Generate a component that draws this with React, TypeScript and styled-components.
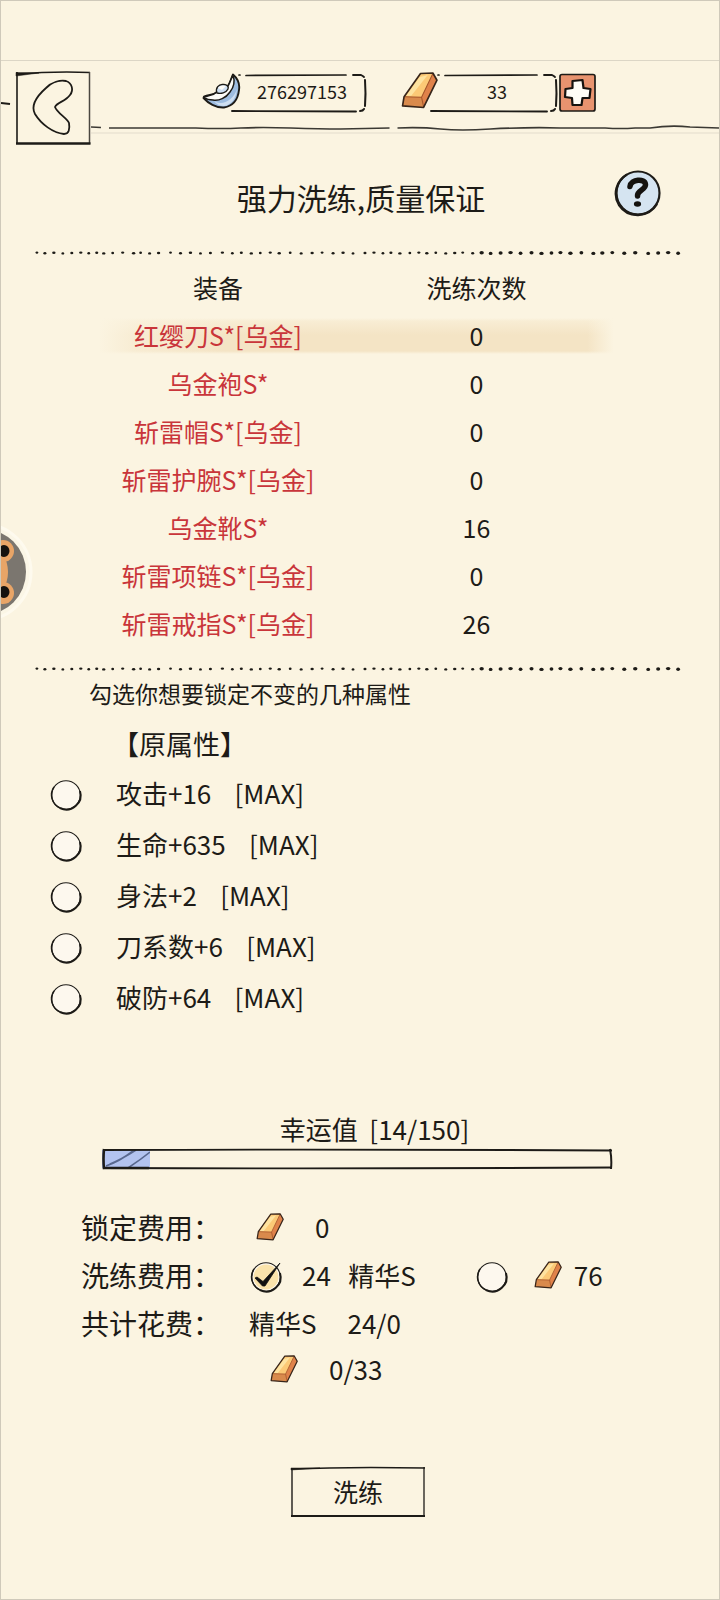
import React, { useState } from "react";
import styled, { createGlobalStyle } from "styled-components";

const ink = "#1d1b17";
const paper = "#fbf4e1";
const fontStack = '"Noto Sans CJK SC", "Noto Sans", sans-serif';

const GlobalStyle = createGlobalStyle`
  *, *::before, *::after { box-sizing: border-box; }
  body { margin: 0; background: ${paper}; }
  button, input { font: inherit; color: inherit; margin: 0; }
`;

const Page = styled.main`
  position: relative;
  min-height: 100vh;
  overflow: hidden;
  background: ${paper};
  border: 1px solid #cfc9ba;
  color: ${ink};
  font-family: ${fontStack};
  font-size: 26px;
  line-height: 48px;
`;

const StatusStrip = styled.div`
  height: 60px;
  border-bottom: 1px solid #dcd6c6;
`;

const Header = styled.header`
  display: grid;
  grid-template-columns: 14px 76px 1fr;
  padding-top: 10px;
`;

const BackButton = styled.button`
  padding: 0;
  border: 0;
  background: none;
  height: 76px;
  cursor: pointer;
  svg { display: block; }
`;

const Stub = styled.svg`
  margin-top: 28px;
`;

const HeaderMain = styled.div`
  display: flex;
  flex-direction: column;
  gap: 10px;
  padding-top: 1px;
`;

const Wallet = styled.div`
  display: flex;
  padding-left: 111px;
`;

const Pill = styled.div<{ $width: number; $gap?: number }>`
  display: grid;
  width: ${(p) => p.$width}px;
  height: 42px;
  margin-right: ${(p) => p.$gap ?? 0}px;
  > * { grid-area: 1 / 1; }
`;

const PillValue = styled.span`
  padding-left: 34px;
  text-align: center;
  font-size: 18px;
  line-height: 38px;
`;

const IconButton = styled.button`
  display: block;
  padding: 0;
  border: 0;
  background: none;
  cursor: pointer;
  svg { display: block; }
`;

const HeaderLine = styled.svg`
  display: block;
  width: 100%;
  height: 10px;
`;

const TitleRow = styled.div`
  display: grid;
  grid-template-columns: 1fr auto 1fr;
  align-items: center;
  padding: 0 56px 0 58px;
  margin-top: 20px;
  height: 52px;
`;

const Title = styled.h1`
  grid-column: 2;
  margin: 0;
  padding-top: 8px;
  font-size: 30px;
  line-height: 44px;
  font-weight: 400;
`;

const HelpSlot = styled.div`
  justify-self: end;
`;

const Dots = styled.svg`
  display: block;
  width: 100%;
  height: 12px;
`;

const TitleSection = styled.section`
  padding-bottom: 28px;
`;

const GearSection = styled.section`
  padding: 4px 100px 16px 87px;
`;

const GearTable = styled.table`
  width: 100%;
  table-layout: fixed;
  border-collapse: collapse;
  font-size: 25px;
`;

const GearRow = styled.tr<{ $active?: boolean }>`
  height: 48px;
  background: ${(p) =>
    p.$active
      ? "linear-gradient(90deg, rgba(251,244,225,1) 2%, rgba(251,244,225,0.5) 9%, rgba(251,244,225,0) 26%, rgba(251,244,225,0) 94%, rgba(251,244,225,1) 99%), linear-gradient(180deg, transparent 7px, #f8edd4 10px, #f4e4c5 24px, #f4e4c5 40px, transparent 43px)"
      : "none"};
`;

const HeadCell = styled.th<{ $count?: boolean }>`
  padding: 0 ${(p) => (p.$count ? 14 : 0)}px 0 0;
  width: ${(p) => (p.$count ? "auto" : "260px")};
  font-weight: 400;
  line-height: 48px;
`;

const NameCell = styled.td`
  padding: 0;
  text-align: center;
  color: #c9353a;
`;

const CountCell = styled.td`
  padding: 0 14px 0 0;
  text-align: center;
`;

const LockSection = styled.fieldset`
  margin: 0;
  padding: 0 49px;
  border: 0;
`;

const Hint = styled.legend`
  padding: 0 0 0 39px;
  font-size: 23px;
  line-height: 36px;
`;

const GroupTitle = styled.h2`
  margin: 0;
  padding: 10px 0 0 62px;
  font-size: 27px;
  line-height: 46px;
  font-weight: 400;
`;

const OptionRow = styled.label`
  display: flex;
  align-items: center;
  gap: 34px;
  height: 51px;
  white-space: pre;
  cursor: pointer;
`;

const Tick = styled.span`
  display: grid;
  flex: none;
  width: 32px;
  height: 32px;
  margin-top: 4px;
  > * { grid-area: 1 / 1; }
  input { appearance: none; width: 32px; height: 32px; cursor: pointer; }
  svg { pointer-events: none; overflow: visible; }
`;

const LuckSection = styled.section`
  padding: 88px 106px 0 101px;
`;

const LuckLabel = styled.div`
  padding-left: 34px;
  text-align: center;
  line-height: 38px;
  white-space: pre;
`;

const Meter = styled.div`
  display: grid;
  height: 22px;
  > * { grid-area: 1 / 1; }
`;

const MeterFill = styled.div`
  margin: 2px 0;
  overflow: hidden;
  background: #b3c3f0;
  svg { display: block; }
`;

const MeterFrame = styled.svg`
  width: 100%;
  height: 22px;
`;

const CostSection = styled.section`
  display: grid;
  grid-template-columns: 168px 1fr;
  padding: 33px 72px 0 80px;
`;

const CostLabel = styled.div`
  font-size: 28px;
`;

const CostLine = styled.div<{ $indent?: number; $gap: number; $short?: boolean }>`
  display: flex;
  align-items: center;
  height: ${(p) => (p.$short ? 44 : 48)}px;
  gap: ${(p) => p.$gap}px;
  padding-left: ${(p) => p.$indent ?? 0}px;
  grid-column: 2;
  white-space: pre;
`;

const PayOption = styled.label<{ $gap: number }>`
  display: flex;
  align-items: center;
  gap: ${(p) => p.$gap}px;
  cursor: pointer;
`;

const ActionBar = styled.footer`
  display: flex;
  justify-content: center;
  padding: 75px 4px 74px 0;
`;

const RefineButton = styled.button`
  display: grid;
  width: 136px;
  height: 52px;
  padding: 0;
  border: 0;
  background: none;
  font-size: 25px;
  line-height: 50px;
  cursor: pointer;
  > * { grid-area: 1 / 1; }
`;

const FloatingBadge = styled.button`
  position: absolute;
  left: 0;
  top: 518px;
  padding: 0;
  border: 0;
  background: none;
  cursor: pointer;
  svg { display: block; }
`;

const DOT_X = [
  36, 44, 53, 62, 71, 80, 88, 96, 103, 112, 122, 133, 140, 149, 158, 170, 180, 190, 200, 210, 222, 232,
  241, 251, 260, 270, 279, 290, 301, 312, 322, 333, 343, 353, 365, 374, 383, 391, 400, 410, 419, 427, 436,
  446, 455, 463, 473, 482, 491, 501, 511, 521, 532, 542, 552, 561, 571, 582, 594, 603, 613, 625, 636, 649,
  659, 669, 679,
];

function DottedRule() {
  return (
    <Dots viewBox="0 0 720 12" aria-hidden="true">
      {DOT_X.map((x, i) => (
        <ellipse
          key={x}
          cx={x}
          cy={6 + ((i * 3) % 5) * 0.2 - 0.4}
          rx={(x > 480 ? 1.9 : 1.4) + (i % 3) * 0.15}
          ry={x > 480 ? 1.7 : 1.2}
          fill={ink}
        />
      ))}
    </Dots>
  );
}

function Ingot({ width, height }: { width: number; height: number }) {
  return (
    <svg width={width} height={height} viewBox="0 0 36 36" aria-hidden="true">
      <path d="M19 1.5 L31 1 L35 8 L22 34.500 L1.500 33 L3 24 Z" fill="#e0824a" />
      <path d="M19 1.500 L31 1.500 L20 24.500 L3.500 24 Z" fill="#fcc976" />
      <path d="M18 5 L26 3 L10 23 L5 23 Z" fill="#fee3a0" />
      <path d="M3.500 24 L20 24.500 L22 34 L1.500 32.500 Z" fill="#d98a4c" />
      <path d="M31 1.500 L20 24.500 M3.500 24 L20 24.500 L22 34" fill="none" stroke="#a5552a" strokeWidth="1" />
      <path
        d="M19 1.500 L31 1 L35 8 L22 34.500 L1.500 33 L3 24 Z"
        fill="none"
        stroke="#37251a"
        strokeWidth="1.600"
        strokeLinejoin="round"
      />
    </svg>
  );
}

function Silver() {
  return (
    <svg width="39" height="38" viewBox="0 0 39 38" aria-hidden="true">
      <path
        d="M31 2.500 C35 6 38 12 37 18 C36 27 31 34 22 35.500 C14 36 6 31 1.500 26 L2 24.500 C7 22 11 24 15 20 L26 14 C28 11 29 7 31 2.500 Z"
        fill="#9dbce0"
        stroke={ink}
        strokeWidth="1.900"
        strokeLinejoin="round"
      />
      <path d="M12 29 C20 34 31 29 35 17 C34 27 29 33 22 34 C18 34 14 32 12 29 Z" fill="#cfdff1" />
      <path
        d="M31 3 C33 9 32 15 28 20 C24 26 17 29 11 28 C7 28 4 27 2 25.500 C6 23 11 24 15 20 L26 14 C28 11 29 7 31 3 Z"
        fill="#fdfcf8"
        stroke={ink}
        strokeWidth="1.500"
        strokeLinejoin="round"
      />
      <path d="M15 21 C13 16 17 12 21 12.500 C25 12 27 15 26 17 C24 21 19 22 15 21 Z" fill="#cfe0f3" stroke={ink} strokeWidth="1.400" />
      <path d="M16 16 C18 13 22 13 24 14 L20 18 Z" fill="#fdfcf8" />
    </svg>
  );
}

function PillFrame({ width }: { width: number }) {
  const r = width - 3;
  return (
    <svg width={width} height="42" viewBox={`0 0 ${width} 42`} aria-hidden="true">
      <g fill="none" stroke={ink} strokeLinecap="round">
        <path d={`M37 3 L38 3 M44 3.500 L${r - 19} 3`} strokeWidth="1.700" />
        <path d={`M${r - 12} 3 L${r - 4} 3 Q${r - 2} 4 ${r - 1} 5`} strokeWidth="1.800" />
        <path d={`M${r} 8 Q${r + 1} 22 ${r} 34`} strokeWidth="2" />
        <path d={`M30 39 L${r - 9} 39.500`} strokeWidth="1.900" />
        <path d={`M${r - 5} 39 Q${r - 2} 39 ${r - 1} 37`} strokeWidth="2" />
      </g>
    </svg>
  );
}

type TickProps = {
  type: "checkbox" | "radio";
  checked: boolean;
  onChange: () => void;
  name?: string;
};

function RoundTick({ type, checked, onChange, name }: TickProps) {
  return (
    <Tick>
      <input type={type} name={name} checked={checked} onChange={onChange} />
      <svg width="32" height="32" viewBox="0 0 32 32" aria-hidden="true">
        <circle cx="16" cy="16" r="14.300" fill="#fdf8ee" stroke={ink} strokeWidth="1.100" />
        {checked && <circle cx="16" cy="16" r="12.500" fill="#fae3ab" />}
        <path d="M30 12 A14.300 14.300 0 0 1 10 29" fill="none" stroke={ink} strokeWidth="2" />
        <path d="M10 29 A14.300 14.300 0 0 1 4 8" fill="none" stroke={ink} strokeWidth="1.500" />
        {checked && (
          <path d="M5 17 L7 16 L13 20.500 L30 2 L15 25 L12.500 25 Z" fill="#111" stroke="#111" strokeWidth="0.800" />
        )}
      </svg>
    </Tick>
  );
}

const gear = [
  { name: "红缨刀S*[乌金]", count: 0 },
  { name: "乌金袍S*", count: 0 },
  { name: "斩雷帽S*[乌金]", count: 0 },
  { name: "斩雷护腕S*[乌金]", count: 0 },
  { name: "乌金靴S*", count: 16 },
  { name: "斩雷项链S*[乌金]", count: 0 },
  { name: "斩雷戒指S*[乌金]", count: 26 },
];

const attributes = ["攻击+16", "生命+635", "身法+2", "刀系数+6", "破防+64"];

const luck = { value: 14, max: 150 };

export default function App() {
  const [locked, setLocked] = useState<string[]>([]);
  const [pay, setPay] = useState("essence");
  const [active, setActive] = useState(0);

  const toggle = (a: string) =>
    setLocked((list) => (list.includes(a) ? list.filter((x) => x !== a) : [...list, a]));

  return (
    <Page>
      <GlobalStyle />
      <StatusStrip />
      <Header>
        <Stub width="14" height="8" viewBox="0 0 14 8" aria-hidden="true">
          <path d="M0 4 L9 5" stroke={ink} strokeWidth="1.800" />
        </Stub>
        <BackButton aria-label="返回">
          <svg width="76" height="76" viewBox="0 0 76 76" aria-hidden="true">
            <g fill="none" stroke={ink}>
              <path d="M1 3 C28 1 50 0.500 75 1.500" strokeWidth="1.600" />
              <path d="M1 1.500 L24 2 L1 5 Z" fill={ink} strokeWidth="0.500" />
              <path d="M2 1 L2 73" strokeWidth="1.600" />
              <path d="M74.500 1 L74.500 73" strokeWidth="1.500" stroke="#4a4740" />
              <path d="M1 72.500 L75.500 72.500" strokeWidth="2.400" />
              <path
                d="M31 17 C37 11 45 9 51 10 C57 12 59 19 55 24 C50 31 42 31 40 36 C42 42 52 47 54 52 C55 58 54 63 49 63 C38 62 26 53 20 43 C15 34 22 25 31 17 Z"
                strokeWidth="1.800"
              />
            </g>
          </svg>
        </BackButton>
        <HeaderMain>
          <Wallet>
            <Pill $width={166} $gap={33}>
              <PillFrame width={166} />
              <Silver />
              <PillValue>276297153</PillValue>
            </Pill>
            <Pill $width={158}>
              <PillFrame width={158} />
              <Ingot width={37} height={37} />
              <PillValue>33</PillValue>
            </Pill>
            <IconButton aria-label="充值">
              <svg width="38" height="42" viewBox="0 0 38 42" aria-hidden="true">
                <rect x="1" y="2.500" width="35" height="36.500" rx="2" fill="#e8936f" stroke={ink} strokeWidth="1.700" />
                <path
                  d="M13.500 9 L23.500 8 L24.500 16 L31.500 17 L30.500 26 L23.500 26 L22.500 33 L13.500 33 L13 26 L6 25 L6.500 17 L13.500 16 Z"
                  fill="#fffdf6"
                  stroke="#16130f"
                  strokeWidth="2.200"
                  strokeLinejoin="round"
                />
              </svg>
            </IconButton>
          </Wallet>
          <HeaderLine viewBox="0 0 629 10" preserveAspectRatio="none" aria-hidden="true">
            <path d="M0 9 H629" stroke="#e3ddcc" strokeWidth="1" />
            <g fill="none" stroke="#3b3933" strokeWidth="1.700">
              <path d="M0 3 L10 3.500" />
              <path d="M18 4 L105 4 Q130 5 150 4 T200 4 T250 5 L299 4" />
              <path d="M307 4 Q330 3 350 5 T400 5 Q440 3 470 4 L515 4 Q530 5 545 4 L560 4 Q580 1 600 3 L629 4" />
            </g>
          </HeaderLine>
        </HeaderMain>
      </Header>

      <TitleSection>
        <TitleRow>
          <Title>强力洗练,质量保证</Title>
          <HelpSlot>
            <IconButton aria-label="帮助">
              <svg width="50" height="48" viewBox="0 0 50 48" aria-hidden="true">
                <circle cx="25" cy="24" r="21.500" fill="#d5e4f1" stroke={ink} strokeWidth="2.200" />
                <path d="M14 5.500 A22 22 0 0 0 6 36 A22.500 22.500 0 0 0 44 35" fill="none" stroke={ink} strokeWidth="2.400" />
                <path
                  d="M17 17.500 C18 10 32 9 32.500 15.500 C33 21 24 21 24.500 27"
                  fill="none"
                  stroke="#14120f"
                  strokeWidth="5.500"
                  strokeLinecap="round"
                />
                <ellipse cx="24.500" cy="35" rx="3.600" ry="2.800" fill="#14120f" />
              </svg>
            </IconButton>
          </HelpSlot>
        </TitleRow>
      </TitleSection>

      <DottedRule />
      <GearSection>
        <GearTable>
          <thead>
            <GearRow>
              <HeadCell>装备</HeadCell>
              <HeadCell $count>洗练次数</HeadCell>
            </GearRow>
          </thead>
          <tbody>
            {gear.map((g, i) => (
              <GearRow key={g.name} $active={i === active} onClick={() => setActive(i)}>
                <NameCell>{g.name}</NameCell>
                <CountCell>{g.count}</CountCell>
              </GearRow>
            ))}
          </tbody>
        </GearTable>
      </GearSection>
      <DottedRule />

      <LockSection>
        <Hint>勾选你想要锁定不变的几种属性</Hint>
        <GroupTitle>【原属性】</GroupTitle>
        {attributes.map((a) => (
          <OptionRow key={a}>
            <RoundTick type="checkbox" checked={locked.includes(a)} onChange={() => toggle(a)} />
            <span>{a + "    [MAX]"}</span>
          </OptionRow>
        ))}
      </LockSection>

      <LuckSection>
        <LuckLabel id="luck">{`幸运值  [${luck.value}/${luck.max}]`}</LuckLabel>
        <Meter role="progressbar" aria-labelledby="luck" aria-valuenow={luck.value} aria-valuemax={luck.max}>
          <MeterFill style={{ width: `${(luck.value / luck.max) * 100}%` }}>
            <svg width="48" height="18" viewBox="0 0 48 18" aria-hidden="true">
              <path
                d="M4 16 Q18 11 31 1 M26 18 Q38 10 48 2 M8 14 Q20 9 34 0"
                fill="none"
                stroke="#59688f"
                strokeWidth="1.600"
              />
            </svg>
          </MeterFill>
          <MeterFrame viewBox="0 0 512 22" preserveAspectRatio="none" aria-hidden="true">
            <g fill="none" stroke={ink}>
              <path d="M1 2 Q250 1 511 2.500" strokeWidth="1.900" />
              <path d="M1 20 Q250 21 511 19.500" strokeWidth="1.900" />
              <path d="M2 1 Q1 11 2 21" strokeWidth="2.600" />
              <path d="M509 1 Q511 11 510 21" strokeWidth="2" />
              <path d="M1 20 L47 20" strokeWidth="2.600" />
            </g>
          </MeterFrame>
        </Meter>
      </LuckSection>

      <CostSection>
        <CostLabel>锁定费用：</CostLabel>
        <CostLine $indent={7} $gap={31}>
          <Ingot width={28} height={28} />
          <span>0</span>
        </CostLine>
        <CostLabel>洗练费用：</CostLabel>
        <CostLine $indent={1} $gap={60}>
          <PayOption $gap={20}>
            <RoundTick type="radio" name="pay" checked={pay === "essence"} onChange={() => setPay("essence")} />
            <span>{"24   精华S"}</span>
          </PayOption>
          <PayOption $gap={26}>
            <RoundTick type="radio" name="pay" checked={pay === "gold"} onChange={() => setPay("gold")} />
            <PayOption as="span" $gap={12}>
              <Ingot width={28} height={28} />
              <span>76</span>
            </PayOption>
          </PayOption>
        </CostLine>
        <CostLabel>共计花费：</CostLabel>
        <CostLine $gap={31}>
          <span>精华S</span>
          <span>24/0</span>
        </CostLine>
        <CostLine $indent={21} $gap={31} $short>
          <Ingot width={28} height={28} />
          <span>0/33</span>
        </CostLine>
      </CostSection>

      <ActionBar>
        <RefineButton>
          <svg width="136" height="52" viewBox="0 0 136 52" aria-hidden="true">
            <g fill="none" stroke={ink}>
              <path d="M1 3 Q60 0.500 135 2" strokeWidth="1.500" />
              <path d="M1 2 L30 2 L1 4 Z" fill={ink} strokeWidth="0.500" />
              <path d="M2 2 L2 50" strokeWidth="1.400" />
              <path d="M134 1 L134 50" strokeWidth="1.300" />
              <path d="M1 50 L135 50" strokeWidth="2.200" />
            </g>
          </svg>
          <span>洗练</span>
        </RefineButton>
      </ActionBar>

      <FloatingBadge aria-label="助手">
        <svg width="34" height="106" viewBox="0 0 34 106" aria-hidden="true">
          <circle cx="-18" cy="53" r="48" fill="#fbf6e6" stroke="#fefaee" strokeWidth="3" />
          <circle cx="-18" cy="53" r="43" fill="#7b766f" />
          <circle cx="2" cy="32" r="11" fill="#e9a567" />
          <circle cx="2" cy="74" r="11" fill="#e9a567" />
          <ellipse cx="-10" cy="53" rx="17" ry="24" fill="#e9a567" />
          <ellipse cx="3" cy="32" rx="5.500" ry="6" fill="#15120f" />
          <ellipse cx="3" cy="73" rx="5.500" ry="6" fill="#15120f" />
        </svg>
      </FloatingBadge>
    </Page>
  );
}
